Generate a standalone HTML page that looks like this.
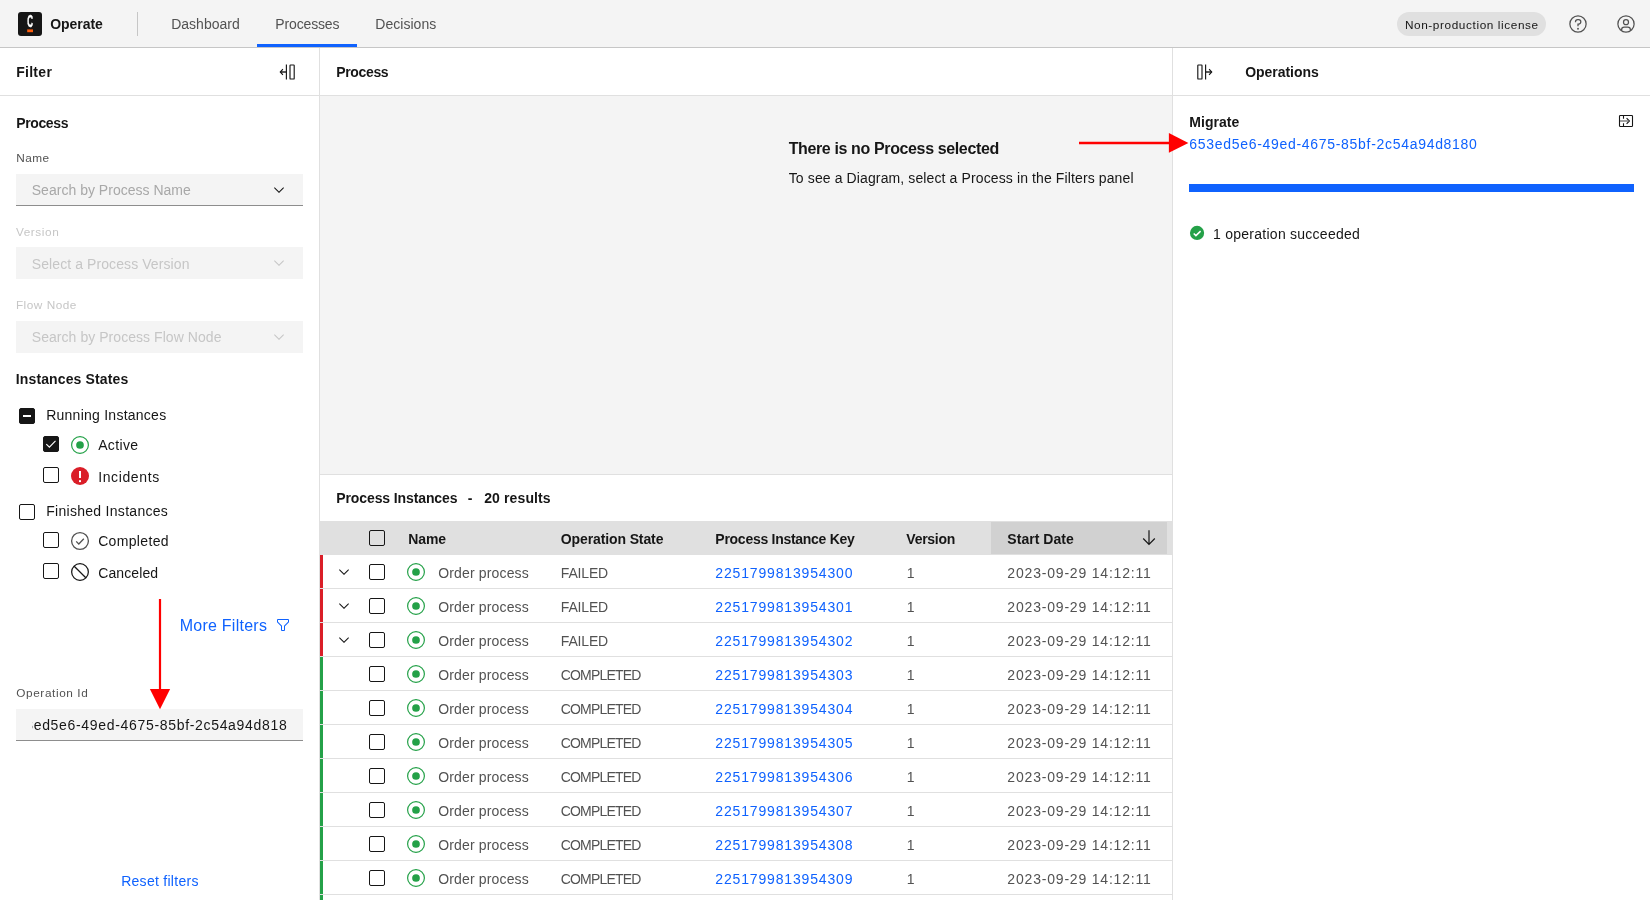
<!DOCTYPE html>
<html lang="en">
<head>
<meta charset="utf-8">
<title>Operate: Process Instances</title>
<style>
*{box-sizing:border-box;margin:0;padding:0}
html,body{width:1650px;height:900px;overflow:hidden;background:#fff}
body{font-family:"Liberation Sans",sans-serif;font-size:14px;color:#161616;position:relative}
#root{position:absolute;left:0;top:0;width:1650px;height:900px;will-change:transform}
.abs,.t,.bx{position:absolute}
.t{white-space:pre;line-height:18px;height:18px}
svg{position:absolute;overflow:visible}
.cb{position:absolute;width:16px;height:16px;border:1px solid #161616;border-radius:2px;background:#fff}
.cb.on{background:#161616}
.inp{position:absolute;left:16px;width:287px;height:32px;background:#f4f4f4}
.inp.bb{border-bottom:1px solid #8d8d8d}
.row{position:absolute;left:320px;width:852px;height:34px;border-bottom:1px solid #e0e0e0;background:#fff}
.row i{position:absolute;left:0;top:0;width:3px;height:33px;background:#24a148}
.row.f i{background:#da1e28}
</style>
</head>
<body>
<div id="root">
<!-- ===== top header ===== -->
<div class="bx" style="left:0;top:0;width:1650px;height:48px;background:#f4f4f4;border-bottom:1px solid #c6c6c6"></div>
<div class="bx" style="left:18px;top:12px;width:24px;height:24px;border-radius:3px;background:#161616"></div>
<svg style="left:18px;top:12px" width="24" height="24" viewBox="0 0 24 24"><text x="0" y="15.250" text-anchor="middle" font-family="Liberation Sans, sans-serif" font-weight="700" font-size="15.800" fill="#fff" stroke="#fff" stroke-width=".5" transform="translate(12.200 0) scale(.5 1)">C</text><rect x="9.200" y="17.400" width="5.800" height="2.800" fill="#fc5d0d"/></svg>
<div class="bx" style="left:137px;top:12px;width:1px;height:24px;background:#c6c6c6"></div>
<div class="bx" style="left:257px;top:44px;width:100px;height:3px;background:#0f62fe"></div>
<div class="bx" style="left:1397px;top:12px;width:149px;height:24px;border-radius:12px;background:#e0e0e0"></div>
<!-- help icon -->
<svg style="left:1568px;top:14px" width="20" height="20" viewBox="0 0 32 32" fill="#525252"><path d="M16 2a14 14 0 1014 14A14 14 0 0016 2zm0 26a12 12 0 1112-12 12 12 0 01-12 12z"/><circle cx="16" cy="23.5" r="1.5"/><path d="M17 8h-1.5a4.49 4.49 0 00-4.5 4.5v.5h2v-.5a2.5 2.5 0 012.5-2.5H17a2.5 2.5 0 010 5h-2v4.5h2V17a4.500 4.500 0 000-9z"/></svg>
<!-- user avatar icon -->
<svg style="left:1616px;top:14px" width="20" height="20" viewBox="0 0 32 32" fill="#525252"><path d="M16 8a5 5 0 105 5 5 5 0 00-5-5zm0 8a3 3 0 113-3 3 3 0 01-3 3z"/><path d="M16 2a14 14 0 1014 14A14.016 14.016 0 0016 2zm-6 24.377V25a3.003 3.003 0 013-3h6a3.003 3.003 0 013 3v1.377a11.899 11.899 0 01-12 0zm13.992-1.451A5.002 5.002 0 0019 20h-6a5.002 5.002 0 00-4.992 4.926 12 12 0 1115.985 0z"/></svg>

<!-- ===== filter panel ===== -->
<div class="bx" style="left:0;top:48px;width:320px;height:852px;background:#fff;border-right:1px solid #e0e0e0"></div>
<div class="bx" style="left:0;top:95px;width:319px;height:1px;background:#e0e0e0"></div>
<!-- collapse icon -->
<svg style="left:279px;top:64px" width="16" height="16" viewBox="0 0 16 16" fill="none" stroke="#161616" stroke-width="1.150"><rect x="11" y="1" width="4.200" height="14" rx=".600"/><path d="M7.400 .400v15.200M3.900 5.200L1.300 8l2.600 2.800"/><path d="M1.600 8h5.800" stroke-width="1.400"/></svg>
<div class="inp bb" style="top:174px"></div>
<div class="inp" style="top:247px"></div>
<div class="inp" style="top:321px"></div>
<div class="inp bb" style="top:709px"></div>
<svg style="left:271px;top:182px" width="16" height="16" viewBox="0 0 16 16" fill="#161616"><path d="M8 11L3 6l.7-.7L8 9.6l4.3-4.3.7.7z"/></svg>
<svg style="left:271px;top:255px" width="16" height="16" viewBox="0 0 16 16" fill="#c6c6c6"><path d="M8 11L3 6l.7-.7L8 9.6l4.3-4.3.7.7z"/></svg>
<svg style="left:271px;top:329px" width="16" height="16" viewBox="0 0 16 16" fill="#c6c6c6"><path d="M8 11L3 6l.7-.7L8 9.6l4.3-4.3.7.7z"/></svg>
<!-- checkboxes -->
<div class="cb on" style="left:19px;top:408px"></div>
<div class="bx" style="left:23px;top:415px;width:8px;height:2px;background:#fff"></div>
<div class="cb on" style="left:43px;top:436px"></div>
<svg style="left:43px;top:436px" width="16" height="16" viewBox="0 0 16 16" fill="none" stroke="#fff" stroke-width="1.150"><path d="M3.300 8.100l3.100 3 6.100-6.200"/></svg>
<div class="cb" style="left:43px;top:467px"></div>
<div class="cb" style="left:19px;top:504px"></div>
<div class="cb" style="left:43px;top:532px"></div>
<div class="cb" style="left:43px;top:563px"></div>
<!-- state icons in filter -->
<svg style="left:70px;top:435px" width="20" height="20" viewBox="0 0 20 20"><circle cx="10" cy="10" r="8.400" fill="none" stroke="#24a148" stroke-width="1.200"/><circle cx="10" cy="10" r="3.850" fill="#24a148"/></svg>
<svg style="left:70px;top:466px" width="20" height="20" viewBox="0 0 20 20"><circle cx="10" cy="10" r="9" fill="#da1e28"/><rect x="9" y="5" width="2" height="7" fill="#fff"/><rect x="9" y="14.200" width="2" height="1.900" fill="#fff"/></svg>
<svg style="left:70px;top:531px" width="20" height="20" viewBox="0 0 20 20" fill="none" stroke="#525252" stroke-width="1.300"><circle cx="10" cy="10" r="8.400"/><path d="M6.2 10.4l2.6 2.6 5-5.2"/></svg>
<svg style="left:70px;top:562px" width="20" height="20" viewBox="0 0 20 20" fill="none" stroke="#161616" stroke-width="1.250"><circle cx="10" cy="10" r="8.350"/><path d="M4.2 4.2l11.6 11.6"/></svg>
<!-- more filters icon -->
<svg style="left:275px;top:617px" width="16" height="16" viewBox="0 0 32 32" fill="#0f62fe"><path d="M18 28h-4a2 2 0 01-2-2v-7.590L4.590 11A2 2 0 014 9.590V6a2 2 0 012-2h20a2 2 0 012 2v3.590a2 2 0 01-.590 1.410L20 18.410V26a2 2 0 01-2 2zM6 6v3.590l8 8V26h4v-8.410l8-8V6z"/></svg>
<!-- red annotation arrow (vertical) -->
<svg style="left:140px;top:590px" width="40" height="125" viewBox="0 0 40 125"><path d="M20 9V100" stroke="#ff0000" stroke-width="2.200" fill="none"/><path d="M9.900 99H30.100L20 119.200z" fill="#ff0000"/></svg>

<!-- ===== middle ===== -->
<div class="bx" style="left:320px;top:95px;width:852px;height:1px;background:#e0e0e0"></div>
<div class="bx" style="left:320px;top:96px;width:852px;height:378px;background:#f4f4f4"></div>
<div class="bx" style="left:320px;top:474px;width:852px;height:1px;background:#e0e0e0"></div>
<div class="bx" style="left:320px;top:521px;width:852px;height:34px;background:#e0e0e0"></div>
<div class="bx" style="left:991px;top:522px;width:176px;height:32px;background:#d1d1d1"></div>
<div class="cb" style="left:369px;top:530px;background:#e0e0e0"></div>
<!-- sort arrow -->
<svg style="left:1141px;top:530px" width="16" height="16" viewBox="0 0 16 16" fill="none" stroke="#161616" stroke-width="1.2"><path d="M8 .300v14M2.200 8.500L8 14.300l5.800-5.800"/></svg>
<div class="row f" style="top:555px"><i></i><svg style="left:16px;top:9px" width="16" height="16" viewBox="0 0 16 16" fill="#161616"><path d="M8 11L3 6l.7-.7L8 9.600l4.300-4.300.7.700z"/></svg><div class="cb" style="left:49px;top:9px"></div><svg style="left:86px;top:7px" width="20" height="20" viewBox="0 0 20 20"><circle cx="10" cy="10" r="8.400" fill="none" stroke="#24a148" stroke-width="1.200"/><circle cx="10" cy="10" r="3.850" fill="#24a148"/></svg></div>
<div class="row f" style="top:589px"><i></i><svg style="left:16px;top:9px" width="16" height="16" viewBox="0 0 16 16" fill="#161616"><path d="M8 11L3 6l.7-.7L8 9.600l4.300-4.300.7.700z"/></svg><div class="cb" style="left:49px;top:9px"></div><svg style="left:86px;top:7px" width="20" height="20" viewBox="0 0 20 20"><circle cx="10" cy="10" r="8.400" fill="none" stroke="#24a148" stroke-width="1.200"/><circle cx="10" cy="10" r="3.850" fill="#24a148"/></svg></div>
<div class="row f" style="top:623px"><i></i><svg style="left:16px;top:9px" width="16" height="16" viewBox="0 0 16 16" fill="#161616"><path d="M8 11L3 6l.7-.7L8 9.600l4.300-4.300.7.700z"/></svg><div class="cb" style="left:49px;top:9px"></div><svg style="left:86px;top:7px" width="20" height="20" viewBox="0 0 20 20"><circle cx="10" cy="10" r="8.400" fill="none" stroke="#24a148" stroke-width="1.200"/><circle cx="10" cy="10" r="3.850" fill="#24a148"/></svg></div>
<div class="row" style="top:657px"><i></i><div class="cb" style="left:49px;top:9px"></div><svg style="left:86px;top:7px" width="20" height="20" viewBox="0 0 20 20"><circle cx="10" cy="10" r="8.400" fill="none" stroke="#24a148" stroke-width="1.200"/><circle cx="10" cy="10" r="3.850" fill="#24a148"/></svg></div>
<div class="row" style="top:691px"><i></i><div class="cb" style="left:49px;top:9px"></div><svg style="left:86px;top:7px" width="20" height="20" viewBox="0 0 20 20"><circle cx="10" cy="10" r="8.400" fill="none" stroke="#24a148" stroke-width="1.200"/><circle cx="10" cy="10" r="3.850" fill="#24a148"/></svg></div>
<div class="row" style="top:725px"><i></i><div class="cb" style="left:49px;top:9px"></div><svg style="left:86px;top:7px" width="20" height="20" viewBox="0 0 20 20"><circle cx="10" cy="10" r="8.400" fill="none" stroke="#24a148" stroke-width="1.200"/><circle cx="10" cy="10" r="3.850" fill="#24a148"/></svg></div>
<div class="row" style="top:759px"><i></i><div class="cb" style="left:49px;top:9px"></div><svg style="left:86px;top:7px" width="20" height="20" viewBox="0 0 20 20"><circle cx="10" cy="10" r="8.400" fill="none" stroke="#24a148" stroke-width="1.200"/><circle cx="10" cy="10" r="3.850" fill="#24a148"/></svg></div>
<div class="row" style="top:793px"><i></i><div class="cb" style="left:49px;top:9px"></div><svg style="left:86px;top:7px" width="20" height="20" viewBox="0 0 20 20"><circle cx="10" cy="10" r="8.400" fill="none" stroke="#24a148" stroke-width="1.200"/><circle cx="10" cy="10" r="3.850" fill="#24a148"/></svg></div>
<div class="row" style="top:827px"><i></i><div class="cb" style="left:49px;top:9px"></div><svg style="left:86px;top:7px" width="20" height="20" viewBox="0 0 20 20"><circle cx="10" cy="10" r="8.400" fill="none" stroke="#24a148" stroke-width="1.200"/><circle cx="10" cy="10" r="3.850" fill="#24a148"/></svg></div>
<div class="row" style="top:861px"><i></i><div class="cb" style="left:49px;top:9px"></div><svg style="left:86px;top:7px" width="20" height="20" viewBox="0 0 20 20"><circle cx="10" cy="10" r="8.400" fill="none" stroke="#24a148" stroke-width="1.200"/><circle cx="10" cy="10" r="3.850" fill="#24a148"/></svg></div>
<div class="row" style="top:895px"><i></i><div class="cb" style="left:49px;top:9px"></div><svg style="left:86px;top:7px" width="20" height="20" viewBox="0 0 20 20"><circle cx="10" cy="10" r="8.400" fill="none" stroke="#24a148" stroke-width="1.200"/><circle cx="10" cy="10" r="3.850" fill="#24a148"/></svg></div>

<!-- ===== operations panel ===== -->
<div class="bx" style="left:1172px;top:48px;width:1px;height:852px;background:#e0e0e0"></div>
<div class="bx" style="left:1173px;top:95px;width:477px;height:1px;background:#e0e0e0"></div>
<svg style="left:1197px;top:64px" width="16" height="16" viewBox="0 0 16 16" fill="none" stroke="#161616" stroke-width="1.150"><rect x=".800" y="1" width="4.200" height="14" rx=".600"/><path d="M8.600 .400v15.200M12.100 5.200L14.700 8l-2.600 2.800"/><path d="M8.600 8h5.800" stroke-width="1.400"/></svg>
<!-- migrate expand icon -->
<svg style="left:1618px;top:113px" width="16" height="16" viewBox="0 0 16 16" fill="none" stroke="#161616" stroke-width="1.100"><rect x="1.500" y="2.500" width="13" height="11" rx=".800"/><path d="M5.500 2.500v3.300M5.500 10.200v3.300M8.600 5.200L11.400 8l-2.800 2.800"/><path d="M2 8h9" stroke="#6f6f6f" stroke-width="1.300"/></svg>
<div class="bx" style="left:1189px;top:184px;width:445px;height:8px;background:#0f62fe"></div>
<svg style="left:1189px;top:226px" width="16" height="16" viewBox="0 0 16 16"><circle cx="8.050" cy="6.950" r="7.100" fill="#24a148"/><path d="M4.700 7.500l2.200 2.100 4.700-4.500" fill="none" stroke="#fff" stroke-width="1.500"/></svg>
<div class="t" style="left:50.27px;top:15.15px;font-size:14px;font-weight:700;color:#161616;letter-spacing:-0.057px">Operate</div>
<div class="t" style="left:171.16px;top:15.15px;font-size:14px;color:#525252;letter-spacing:0.022px">Dashboard</div>
<div class="t" style="left:275.37px;top:15.15px;font-size:14px;color:#525252;letter-spacing:-0.160px">Processes</div>
<div class="t" style="left:375.37px;top:15.15px;font-size:14px;color:#525252;letter-spacing:0.022px">Decisions</div>
<div class="t" style="left:1404.88px;top:15.91px;font-size:11.8px;color:#161616;letter-spacing:0.602px">Non-production license</div>
<div class="t" style="left:16.16px;top:63.15px;font-size:14px;font-weight:700;color:#161616;letter-spacing:0.289px">Filter</div>
<div class="t" style="left:16.16px;top:114.15px;font-size:14px;font-weight:700;color:#161616;letter-spacing:-0.368px">Process</div>
<div class="t" style="left:16.28px;top:148.91px;font-size:11.8px;color:#525252;letter-spacing:0.480px">Name</div>
<div class="t" style="left:31.77px;top:181.15px;font-size:14px;color:#a8a8a8;letter-spacing:0.016px">Search by Process Name</div>
<div class="t" style="left:15.88px;top:222.91px;font-size:11.8px;color:#c6c6c6;letter-spacing:0.592px">Version</div>
<div class="t" style="left:31.77px;top:255.15px;font-size:14px;color:#c6c6c6;letter-spacing:0.089px">Select a Process Version</div>
<div class="t" style="left:15.88px;top:295.91px;font-size:11.8px;color:#c6c6c6;letter-spacing:0.515px">Flow Node</div>
<div class="t" style="left:31.77px;top:328.15px;font-size:14px;color:#c6c6c6;letter-spacing:0.053px">Search by Process Flow Node</div>
<div class="t" style="left:15.77px;top:370.15px;font-size:14px;font-weight:700;color:#161616;letter-spacing:0.132px">Instances States</div>
<div class="t" style="left:46.16px;top:406.15px;font-size:14px;color:#161616;letter-spacing:0.251px">Running Instances</div>
<div class="t" style="left:98.17px;top:436.15px;font-size:14px;color:#161616;letter-spacing:0.371px">Active</div>
<div class="t" style="left:98.17px;top:468.15px;font-size:14px;color:#161616;letter-spacing:0.629px">Incidents</div>
<div class="t" style="left:46.16px;top:502.15px;font-size:14px;color:#161616;letter-spacing:0.291px">Finished Instances</div>
<div class="t" style="left:98.17px;top:532.15px;font-size:14px;color:#161616;letter-spacing:0.334px">Completed</div>
<div class="t" style="left:98.17px;top:564.15px;font-size:14px;color:#161616;letter-spacing:0.117px">Canceled</div>
<div class="t" style="left:179.66px;top:617.46px;font-size:16px;color:#0f62fe;letter-spacing:0.253px">More Filters</div>
<div class="t" style="left:16.28px;top:683.91px;font-size:11.8px;color:#525252;letter-spacing:0.597px">Operation Id</div>
<div class="t" style="left:121.17px;top:872.15px;font-size:14px;color:#0f62fe;letter-spacing:0.280px">Reset filters</div>
<div class="t" style="left:336.16px;top:63.15px;font-size:14px;font-weight:700;color:#161616;letter-spacing:-0.334px">Process</div>
<div class="t" style="left:788.66px;top:140.46px;font-size:16px;font-weight:700;color:#161616;letter-spacing:-0.371px">There is no Process selected</div>
<div class="t" style="left:788.76px;top:169.15px;font-size:14px;color:#161616;letter-spacing:0.116px">To see a Diagram, select a Process in the Filters panel</div>
<div class="t" style="left:336.26px;top:489.15px;font-size:14px;font-weight:700;color:#161616;letter-spacing:-0.106px">Process Instances</div>
<div class="t" style="left:467.76px;top:489.15px;font-size:14px;font-weight:700;color:#161616;letter-spacing:0.000px">-</div>
<div class="t" style="left:484.16px;top:489.15px;font-size:14px;font-weight:700;color:#161616;letter-spacing:0.123px">20 results</div>
<div class="t" style="left:408.37px;top:530.15px;font-size:14px;font-weight:700;color:#161616;letter-spacing:-0.121px">Name</div>
<div class="t" style="left:560.76px;top:530.15px;font-size:14px;font-weight:700;color:#161616;letter-spacing:-0.112px">Operation State</div>
<div class="t" style="left:715.37px;top:530.15px;font-size:14px;font-weight:700;color:#161616;letter-spacing:-0.277px">Process Instance Key</div>
<div class="t" style="left:906.37px;top:530.15px;font-size:14px;font-weight:700;color:#161616;letter-spacing:-0.286px">Version</div>
<div class="t" style="left:1007.37px;top:530.15px;font-size:14px;font-weight:700;color:#161616;letter-spacing:0.037px">Start Date</div>
<div class="t" style="left:438.26px;top:564.15px;font-size:14px;color:#525252;letter-spacing:0.148px">Order process</div>
<div class="t" style="left:560.76px;top:564.15px;font-size:14px;color:#525252;letter-spacing:-0.154px">FAILED</div>
<div class="t" style="left:715.37px;top:564.15px;font-size:14px;color:#0f62fe;letter-spacing:0.833px">2251799813954300</div>
<div class="t" style="left:906.76px;top:564.15px;font-size:14px;color:#525252;letter-spacing:0.000px">1</div>
<div class="t" style="left:1007.37px;top:564.15px;font-size:14px;color:#525252;letter-spacing:0.806px">2023-09-29 14:12:11</div>
<div class="t" style="left:438.26px;top:598.15px;font-size:14px;color:#525252;letter-spacing:0.148px">Order process</div>
<div class="t" style="left:560.76px;top:598.15px;font-size:14px;color:#525252;letter-spacing:-0.154px">FAILED</div>
<div class="t" style="left:715.37px;top:598.15px;font-size:14px;color:#0f62fe;letter-spacing:0.833px">2251799813954301</div>
<div class="t" style="left:906.76px;top:598.15px;font-size:14px;color:#525252;letter-spacing:0.000px">1</div>
<div class="t" style="left:1007.37px;top:598.15px;font-size:14px;color:#525252;letter-spacing:0.806px">2023-09-29 14:12:11</div>
<div class="t" style="left:438.26px;top:632.15px;font-size:14px;color:#525252;letter-spacing:0.148px">Order process</div>
<div class="t" style="left:560.76px;top:632.15px;font-size:14px;color:#525252;letter-spacing:-0.154px">FAILED</div>
<div class="t" style="left:715.37px;top:632.15px;font-size:14px;color:#0f62fe;letter-spacing:0.833px">2251799813954302</div>
<div class="t" style="left:906.76px;top:632.15px;font-size:14px;color:#525252;letter-spacing:0.000px">1</div>
<div class="t" style="left:1007.37px;top:632.15px;font-size:14px;color:#525252;letter-spacing:0.806px">2023-09-29 14:12:11</div>
<div class="t" style="left:438.26px;top:666.15px;font-size:14px;color:#525252;letter-spacing:0.148px">Order process</div>
<div class="t" style="left:560.76px;top:666.15px;font-size:14px;color:#525252;letter-spacing:-0.818px">COMPLETED</div>
<div class="t" style="left:715.37px;top:666.15px;font-size:14px;color:#0f62fe;letter-spacing:0.833px">2251799813954303</div>
<div class="t" style="left:906.76px;top:666.15px;font-size:14px;color:#525252;letter-spacing:0.000px">1</div>
<div class="t" style="left:1007.37px;top:666.15px;font-size:14px;color:#525252;letter-spacing:0.806px">2023-09-29 14:12:11</div>
<div class="t" style="left:438.26px;top:700.15px;font-size:14px;color:#525252;letter-spacing:0.148px">Order process</div>
<div class="t" style="left:560.76px;top:700.15px;font-size:14px;color:#525252;letter-spacing:-0.818px">COMPLETED</div>
<div class="t" style="left:715.37px;top:700.15px;font-size:14px;color:#0f62fe;letter-spacing:0.833px">2251799813954304</div>
<div class="t" style="left:906.76px;top:700.15px;font-size:14px;color:#525252;letter-spacing:0.000px">1</div>
<div class="t" style="left:1007.37px;top:700.15px;font-size:14px;color:#525252;letter-spacing:0.806px">2023-09-29 14:12:11</div>
<div class="t" style="left:438.26px;top:734.15px;font-size:14px;color:#525252;letter-spacing:0.148px">Order process</div>
<div class="t" style="left:560.76px;top:734.15px;font-size:14px;color:#525252;letter-spacing:-0.818px">COMPLETED</div>
<div class="t" style="left:715.37px;top:734.15px;font-size:14px;color:#0f62fe;letter-spacing:0.833px">2251799813954305</div>
<div class="t" style="left:906.76px;top:734.15px;font-size:14px;color:#525252;letter-spacing:0.000px">1</div>
<div class="t" style="left:1007.37px;top:734.15px;font-size:14px;color:#525252;letter-spacing:0.806px">2023-09-29 14:12:11</div>
<div class="t" style="left:438.26px;top:768.15px;font-size:14px;color:#525252;letter-spacing:0.148px">Order process</div>
<div class="t" style="left:560.76px;top:768.15px;font-size:14px;color:#525252;letter-spacing:-0.818px">COMPLETED</div>
<div class="t" style="left:715.37px;top:768.15px;font-size:14px;color:#0f62fe;letter-spacing:0.833px">2251799813954306</div>
<div class="t" style="left:906.76px;top:768.15px;font-size:14px;color:#525252;letter-spacing:0.000px">1</div>
<div class="t" style="left:1007.37px;top:768.15px;font-size:14px;color:#525252;letter-spacing:0.806px">2023-09-29 14:12:11</div>
<div class="t" style="left:438.26px;top:802.15px;font-size:14px;color:#525252;letter-spacing:0.148px">Order process</div>
<div class="t" style="left:560.76px;top:802.15px;font-size:14px;color:#525252;letter-spacing:-0.818px">COMPLETED</div>
<div class="t" style="left:715.37px;top:802.15px;font-size:14px;color:#0f62fe;letter-spacing:0.833px">2251799813954307</div>
<div class="t" style="left:906.76px;top:802.15px;font-size:14px;color:#525252;letter-spacing:0.000px">1</div>
<div class="t" style="left:1007.37px;top:802.15px;font-size:14px;color:#525252;letter-spacing:0.806px">2023-09-29 14:12:11</div>
<div class="t" style="left:438.26px;top:836.15px;font-size:14px;color:#525252;letter-spacing:0.148px">Order process</div>
<div class="t" style="left:560.76px;top:836.15px;font-size:14px;color:#525252;letter-spacing:-0.818px">COMPLETED</div>
<div class="t" style="left:715.37px;top:836.15px;font-size:14px;color:#0f62fe;letter-spacing:0.833px">2251799813954308</div>
<div class="t" style="left:906.76px;top:836.15px;font-size:14px;color:#525252;letter-spacing:0.000px">1</div>
<div class="t" style="left:1007.37px;top:836.15px;font-size:14px;color:#525252;letter-spacing:0.806px">2023-09-29 14:12:11</div>
<div class="t" style="left:438.26px;top:870.15px;font-size:14px;color:#525252;letter-spacing:0.148px">Order process</div>
<div class="t" style="left:560.76px;top:870.15px;font-size:14px;color:#525252;letter-spacing:-0.818px">COMPLETED</div>
<div class="t" style="left:715.37px;top:870.15px;font-size:14px;color:#0f62fe;letter-spacing:0.833px">2251799813954309</div>
<div class="t" style="left:906.76px;top:870.15px;font-size:14px;color:#525252;letter-spacing:0.000px">1</div>
<div class="t" style="left:1007.37px;top:870.15px;font-size:14px;color:#525252;letter-spacing:0.806px">2023-09-29 14:12:11</div>
<div class="t" style="left:1245.27px;top:63.15px;font-size:14px;font-weight:700;color:#161616;letter-spacing:-0.048px">Operations</div>
<div class="t" style="left:1189.27px;top:113.15px;font-size:14px;font-weight:700;color:#161616;letter-spacing:0.047px">Migrate</div>
<div class="t" style="left:1189.27px;top:135.15px;font-size:14px;color:#0f62fe;letter-spacing:0.699px">653ed5e6-49ed-4675-85bf-2c54a94d8180</div>
<div class="t" style="left:1213.07px;top:225.15px;font-size:14px;color:#161616;letter-spacing:0.255px">1 operation succeeded</div>
<div class="abs" style="left:32px;top:709px;width:255px;height:31px;overflow:hidden"><div class="t" style="left:-23.74px;top:7.15px;letter-spacing:0.679px;color:#161616">653ed5e6-49ed-4675-85bf-2c54a94d8180</div></div>
<!-- red annotation arrow (horizontal) -->
<svg style="left:1070px;top:124px" width="130" height="40" viewBox="0 0 130 40"><path d="M9 18.950H100" stroke="#ff0000" stroke-width="2.400" fill="none"/><path d="M98.850 8.900V28.850L118.400 18.900z" fill="#ff0000"/></svg>


</div>
</body>
</html>
